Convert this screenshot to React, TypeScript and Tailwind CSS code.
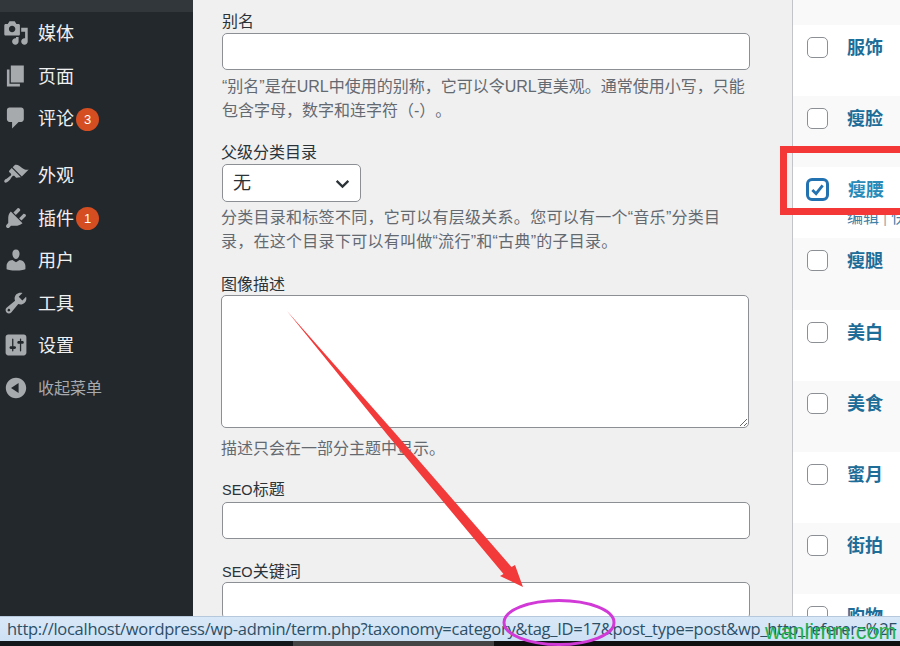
import React from 'react';

const cjk = '"Liberation Sans", "Noto Sans CJK SC", sans-serif';

const icons = {
  media: 'M13 11V4c0-.55-.45-1-1-1h-1.67L9 1H5L3.67 3H2c-.55 0-1 .45-1 1v7c0 .55.45 1 1 1h10c.55 0 1-.45 1-1zM7 4.5c1.38 0 2.5 1.12 2.5 2.5S8.38 9.5 7 9.5 4.5 8.38 4.5 7 5.62 4.5 7 4.5zM14 6h5v10.5c0 1.38-1.12 2.5-2.5 2.5S14 17.88 14 16.5s1.12-2.5 2.5-2.5c.17 0 .34.02.5.05V9h-3V6zm-4 8.05V13h2v3.5c0 1.38-1.12 2.5-2.5 2.5S7 17.88 7 16.5 8.12 14 9.5 14c.17 0 .34.02.5.05z',
  page: 'M6 15V2h10v13H6zm-1 1h8v2H3V5h2v11z',
  comments: 'M5 2h9c1.1 0 2 .9 2 2v7c0 1.1-.9 2-2 2h-2l-5 5v-5H5c-1.1 0-2-.9-2-2V4c0-1.1.9-2 2-2z',
  appearance: 'M14.48 11.06L7.41 3.99l1.5-1.5c.5-.56 2.3-.47 3.51.32 1.21.8 1.43 1.28 2.91 2.1 1.18.64 2.45 1.26 4.45.85zm-.71.71L6.7 4.7 4.93 6.47c-.39.39-.39 1.02 0 1.41l1.06 1.06c.39.39.39 1.03 0 1.42-.6.6-1.43 1.11-2.21 1.69-.35.26-.7.53-1.01.84C1.43 13.23.4 14.79 1.2 15.6c.81.8 2.37-.23 3.71-1.57.31-.31.58-.66.85-1.02.57-.78 1.08-1.6 1.69-2.21.39-.39 1.02-.39 1.41 0l1.06 1.06c.39.39 1.02.39 1.41 0z',
  plugins: 'M13.11 4.36L9.87 7.6 8 5.73l3.24-3.24c.35-.34 1.05-.2 1.56.32.52.51.66 1.21.31 1.55zm-8 1.77l.91-1.12 9.01 9.01-1.19.84c-.71.71-2.63 1.16-3.82 1.16H6.14L4.9 17.26c-.59.59-1.54.59-2.12 0-.59-.58-.59-1.53 0-2.12l1.24-1.24v-3.88c0-1.13.4-3.19 1.09-3.89zm7.26 3.97l3.24-3.24c.34-.35 1.04-.21 1.55.31.52.51.66 1.21.31 1.55l-3.24 3.25z',
  users: 'M10 9.25c-2.27 0-2.73-3.44-2.73-3.44C7 4.02 7.82 2 9.97 2c2.16 0 2.98 2.02 2.71 3.81 0 0-.41 3.44-2.68 3.44zm0 2.57L12.72 10c2.39 0 4.52 2.33 4.52 4.53v2.49s-3.65 1.13-7.24 1.13c-3.65 0-7.24-1.13-7.24-1.13v-2.49c0-2.25 1.94-4.48 4.47-4.48z',
  tools: 'M16.68 9.77c-1.34 1.34-3.3 1.67-4.95.99l-5.41 6.52c-.99.99-2.59.99-3.58 0s-.99-2.59 0-3.57l6.52-5.42c-.68-1.65-.35-3.61.99-4.95 1.28-1.28 3.12-1.62 4.72-1.06l-2.89 2.89 2.82 2.82 2.86-2.87c.53 1.58.18 3.39-1.08 4.65zM3.81 16.21c.4.39 1.04.39 1.43 0 .4-.4.4-1.04 0-1.43-.39-.4-1.03-.4-1.43 0-.39.39-.39 1.03 0 1.43z',
  settings: 'M18 16V4c0-1.1-.9-2-2-2H4c-1.1 0-2 .9-2 2v12c0 1.1.9 2 2 2h12c1.1 0 2-.9 2-2zM8 11h1c.55 0 1 .45 1 1s-.45 1-1 1H8v1.5c0 .28-.22.5-.5.5s-.5-.22-.5-.5V13H6c-.55 0-1-.45-1-1s.45-1 1-1h1V5.5c0-.28.22-.5.5-.5s.5.22.5.5V11zm5-2h-1c-.55 0-1-.45-1-1s.45-1 1-1h1V5.5c0-.28.22-.5.5-.5s.5.22.5.5V7h1c.55 0 1 .45 1 1s-.45 1-1 1h-1v5.5c0 .28-.22.5-.5.5s-.5-.22-.5-.5V9z',
  collapse: 'M10 2.16c4.33 0 7.84 3.51 7.84 7.84s-3.51 7.84-7.84 7.84S2.16 14.33 2.16 10 5.71 2.16 10 2.16zm2 11.72V6.12L6.18 9.97z',
};

function Dashicon({ d }: { d: string }) {
  return (
    <svg viewBox="0 0 20 20" className="w-[26px] h-[26px] shrink-0 fill-[#a7aaad]">
      <path d={d} />
    </svg>
  );
}

function MenuItem({ icon, label, badge }: { icon: string; label: string; badge?: number }) {
  return (
    <div className="h-[42.5px] flex items-center pl-[3px]">
      <Dashicon d={icon} />
      <span className="ml-[9px] pt-[2px] text-[18px] leading-none text-[#f0f0f1]">{label}</span>
      {badge !== undefined && (
        <span className="ml-[2px] mt-[2px] w-[23px] h-[23px] rounded-full bg-[#d54e21] text-white text-[13px] flex items-center justify-center">
          {badge}
        </span>
      )}
    </div>
  );
}

function Sidebar() {
  return (
    <aside className="w-[193px] shrink-0 bg-[#23282d] flex flex-col">
      <div className="h-[12px] bg-[#32373c]" />
      <MenuItem icon={icons.media} label="媒体" />
      <MenuItem icon={icons.page} label="页面" />
      <MenuItem icon={icons.comments} label="评论" badge={3} />
      <div className="h-[14.5px]" />
      <MenuItem icon={icons.appearance} label="外观" />
      <MenuItem icon={icons.plugins} label="插件" badge={1} />
      <MenuItem icon={icons.users} label="用户" />
      <MenuItem icon={icons.tools} label="工具" />
      <MenuItem icon={icons.settings} label="设置" />
      <div className="h-[42.5px] flex items-center pl-[3px]">
        <Dashicon d={icons.collapse} />
        <span className="ml-[9px] pt-[3px] text-[16px] leading-none text-[#a7aaad]">收起菜单</span>
      </div>
    </aside>
  );
}

function Label({ children, className }: { children: React.ReactNode; className: string }) {
  return <div className={`h-[24px] text-[16px] leading-[26px] text-[#2c3338] ${className}`}>{children}</div>;
}

function Help({ children, className }: { children: React.ReactNode; className: string }) {
  return <p className={`pt-px -mb-px text-[16px] leading-[24px] text-[#646970] ${className}`}>{children}</p>;
}

function TextBox() {
  return <div className="h-[37px] w-[528px] shrink-0 bg-white border border-[#8c8f94] rounded-[5px]" />;
}

function FormColumn() {
  return (
    <main className="flex-1 bg-[#f0f0f1] pl-[29px] pt-[9px] flex flex-col">
      <Label className="">别名</Label>
      <TextBox />
      <Help className="mt-[4px] w-[528px]">“别名”是在URL中使用的别称，它可以令URL更美观。通常使用小写，只能包含字母，数字和连字符（-）。</Help>
      <Label className="mt-[18px] -ml-px">父级分类目录</Label>
      <div className="w-[139px] h-[38px] shrink-0 bg-white border border-[#8c8f94] rounded-[5px] flex items-center justify-between pl-[10px] pr-[9px]">
        <span className="pt-px text-[18px] text-[#2c3338]">无</span>
        <svg viewBox="0 0 16 16" className="w-[17px] h-[17px] fill-none stroke-[#2c3338] stroke-[2.2]">
          <path d="M2.5 5.5L8 11l5.5-5.5" />
        </svg>
      </div>
      <Help className="mt-[3px] -ml-px w-[510px] tracking-[0.27px]">分类目录和标签不同，它可以有层级关系。您可以有一个“音乐”分类目录，在这个目录下可以有叫做“流行”和“古典”的子目录。</Help>
      <Label className="mt-[19px] -ml-px">图像描述</Label>
      <textarea className="-mt-px -ml-px w-[528px] h-[133px] shrink-0 bg-white border border-[#8c8f94] rounded-[5px]" />
      <Help className="mt-[8px] -ml-px">描述只会在一部分主题中显示。</Help>
      <Label className="mt-[17px]"><span className="text-[14.5px]">SEO</span>标题</Label>
      <div className="mt-px">
        <TextBox />
      </div>
      <Label className="mt-[20px]"><span className="text-[14.5px]">SEO</span>关键词</Label>
      <div className="-mt-px">
        <TextBox />
      </div>
    </main>
  );
}

const terms = ['服饰', '瘦脸', '瘦腰', '瘦腿', '美白', '美食', '蜜月', '街拍', '购物'];

function TermRow({ name, index }: { name: string; index: number }) {
  const checked = name === '瘦腰';
  return (
    <div className={`h-[71.15px] shrink-0 relative pt-[11px] pl-[14px] ${index % 2 === 0 ? 'bg-white' : 'bg-[#f9f9f9]'}`}>
      <div className="h-[23px] flex items-center">
        {checked ? (
          <div className="w-[23px] h-[23px] -ml-px rounded-[6px] border-[3px] border-[#2271b1] bg-white flex items-center justify-center">
            <svg viewBox="0 0 16 16" className="w-[15px] h-[15px] fill-none stroke-[#2271b1] stroke-[3]">
              <path d="M2.5 8.5L6.5 12.5L13.5 3.5" />
            </svg>
          </div>
        ) : (
          <div className="w-[21px] h-[21px] rounded-[5px] border border-[#8c8f94] bg-white" />
        )}
        <span className={`text-[18px] font-bold ml-[19px] pt-[2px] whitespace-nowrap ${checked ? 'text-[#2a8ab8]' : 'text-[#1d6d98]'}`}>{name}</span>
      </div>
      {checked && (
        <div className="pl-[40px] mt-[7px] text-[16px] leading-[20px] whitespace-nowrap text-[#3f7fa6]">
          编辑<span className="mx-[4px] text-[#a7aaad]">|</span>快速编辑
        </div>
      )}
    </div>
  );
}

function TermList() {
  return (
    <section className="w-[108px] shrink-0 border-l border-[#c3c4c7] flex flex-col overflow-hidden bg-white">
      <div className="h-[25px] shrink-0 bg-[#f9f9f9]" />
      {terms.map((name, i) => (
        <TermRow key={name} name={name} index={i} />
      ))}
    </section>
  );
}

function StatusBar() {
  return (
    <div className="absolute left-0 right-0 bottom-0 flex flex-col">
      <div className="h-[25px] bg-gradient-to-b from-[#d9e8f8] to-[#cde1f5] border-t border-[#b5c8dc] pl-[7px] flex items-center overflow-hidden whitespace-nowrap text-[#2d4f66] text-[16.5px] tracking-[-0.28px]" style={{ fontFamily: '"Open Sans", sans-serif' }}>
        http://localhost/wordpress/wp-admin/term.php?taxonomy=category&amp;tag_ID=17&amp;post_type=post&amp;wp_http_referer=%2F
      </div>
      <div className="h-[5px] flex">
        <div className="w-[293px] bg-[#14171a]" />
        <div className="w-[201px] bg-[#444444]" />
        <div className="flex-1 bg-[#101010]" />
      </div>
    </div>
  );
}

function Annotations() {
  return (
    <>
      {/* red box round the ticked term */}
      <div className="absolute left-[780px] top-[146px] w-[130px] h-[69px] border-[7px] border-[#f43737]" />
      {/* arrow and ellipse, drawn on the screenshot */}
      <svg viewBox="0 0 900 646" className="absolute inset-0 w-[900px] h-[646px] pointer-events-none">
        <polygon points="287,311 395,433 511.5,567 515,565 523,587 500,576 503.5,574 387.5,435" fill="#f23a3a" />
        <ellipse cx="559" cy="622.5" rx="55" ry="22" fill="none" stroke="#d13ad6" strokeWidth="3" />
      </svg>
      <span className="absolute left-[765px] top-[616px] text-[21.5px] leading-[32px] text-[#22b14c]">wanlimm.com</span>
    </>
  );
}

export default function App() {
  return (
    <div className="relative w-[900px] h-[646px] overflow-hidden flex [text-spacing-trim:space-all]" style={{ fontFamily: cjk }}>
      <Sidebar />
      <FormColumn />
      <TermList />
      <StatusBar />
      <Annotations />
    </div>
  );
}
